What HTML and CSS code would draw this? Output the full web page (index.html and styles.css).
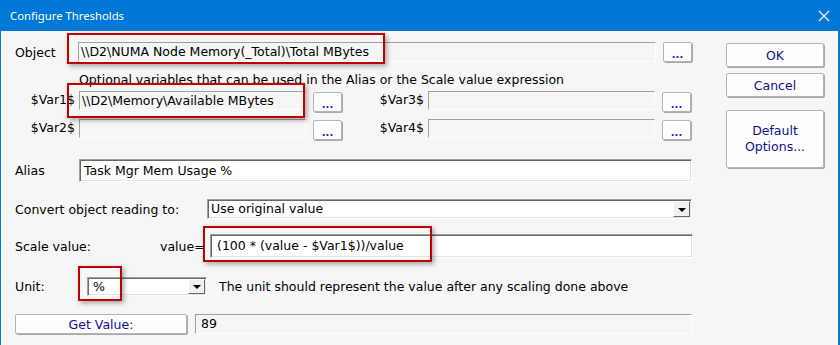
FILE: index.html
```html
<!DOCTYPE html>
<html>
<head>
<meta charset="utf-8">
<link rel="stylesheet" href="styles.css">
</head>
<body>
<div class="window">
  <div class="titlebar">
    <span class="title">Configure Thresholds</span>
    <svg class="close" width="12" height="12" viewBox="0 0 12 12"><path d="M1 1 L11 11 M11 1 L1 11" stroke="#fff" stroke-width="1.1" fill="none"/></svg>
  </div>
  <div class="content">
    <div class="main">
      <div class="row row-object">
        <span class="lbl w63">Object</span>
        <div class="field ro f-object">\\D2\NUMA Node Memory(_Total)\Total MBytes</div>
        <button class="btn dots">...</button>
      </div>
      <div class="row row-opt">Optional variables that can be used in the Alias or the Scale value expression</div>
      <div class="row vars v1">
        <span class="lbl vlbl-l">$Var1$</span>
        <div class="field ro f-var">\\D2\Memory\Available MBytes</div>
        <button class="btn dots">...</button>
        <span class="lbl vlbl-r">$Var3$</span>
        <div class="field ro f-var"></div>
        <button class="btn dots">...</button>
      </div>
      <div class="row vars v2">
        <span class="lbl vlbl-l">$Var2$</span>
        <div class="field ro f-var"></div>
        <button class="btn dots">...</button>
        <span class="lbl vlbl-r">$Var4$</span>
        <div class="field ro f-var"></div>
        <button class="btn dots">...</button>
      </div>
      <div class="row row-alias">
        <span class="lbl w64">Alias</span>
        <div class="field edit f-alias">Task Mgr Mem Usage %</div>
      </div>
      <div class="row row-convert">
        <span class="lbl w192">Convert object reading to:</span>
        <div class="field edit select f-convert"><span class="seltext">Use original value</span><span class="ddbtn"><i class="tri"></i></span></div>
      </div>
      <div class="row row-scale">
        <span class="lbl w145">Scale value:</span>
        <span class="lbl veq">value=</span>
        <div class="field edit f-scale">(100 * (value - $Var1$))/value</div>
      </div>
      <div class="row row-unit">
        <span class="lbl w72">Unit:</span>
        <div class="field edit select f-unit"><span class="seltext">%</span><span class="ddbtn"><i class="tri"></i></span></div>
        <span class="unit-note">The unit should represent the value after any scaling done above</span>
      </div>
      <div class="row row-get">
        <button class="btn getv">Get Value:</button>
        <div class="field ro f-result">89</div>
      </div>
    </div>
    <div class="side">
      <button class="btn sbtn ok">OK</button>
      <button class="btn sbtn cancel">Cancel</button>
      <button class="btn sbtn defaults">Default<br>Options...</button>
    </div>
  </div>
  <div class="hl hl-object"></div>
  <div class="hl hl-var1"></div>
  <div class="hl hl-scale"></div>
  <div class="hl hl-unit"></div>
</div>
</body>
</html>
```
FILE: styles.css
```css
* { box-sizing: border-box; }
html, body { margin: 0; padding: 0; background: #f6f6f6; }
.window {
  position: relative;
  width: 840px;
  height: 345px;
  background: #f6f6f6;
  border-left: 1px solid #0078d7;
  border-right: 2px solid #0078d7;
  font-family: "DejaVu Sans", Verdana, sans-serif;
  font-size: 12.5px;
  color: #000;
  overflow: hidden;
}
.titlebar {
  height: 31px;
  background: #0078d7;
  display: flex;
  align-items: center;
  justify-content: space-between;
  padding: 0 8px 0 9px;
  margin-left: -1px;
  margin-right: -2px;
}
.title {
  color: #fff;
  font-family: "Noto Sans", "Open Sans", sans-serif;
  font-size: 11.3px;
  padding-left: 1px;
}
.close { margin-right: 2px; }
.content {
  display: flex;
  padding: 11px 0 0 14px;
}
.main { width: 679px; display: flex; flex-direction: column; }
.side { margin-left: 32px; width: 98px; display: flex; flex-direction: column; padding-top: 1px; }

.row { display: flex; align-items: center; }
.lbl { white-space: nowrap; flex: none; }
.w63 { width: 63px; }
.w64 { width: 64px; }
.w192 { width: 192px; }
.w145 { width: 145px; }
.w72 { width: 72px; }

.field {
  flex: none;
  white-space: nowrap;
  overflow: hidden;
  line-height: 16px;
}
.ro {
  background: #f6f6f6;
  border: 1px solid;
  border-color: #a0a0a0 #ffffff #ffffff #a0a0a0;
  padding: 1px 2px;
}
.edit {
  background: #fff;
  border: 1px solid;
  border-color: #a0a0a0 #ffffff #ffffff #a0a0a0;
  box-shadow: inset 1px 1px 0 #696969, inset -1px -1px 0 #e3e3e3;
  padding: 2px 4px;
}

.btn {
  flex: none;
  font-family: inherit;
  font-size: inherit;
  background: #fdfdfd;
  border: 1px solid #b4b4b4;
  border-radius: 2px;
  box-shadow: 1px 1px 0 #a8a8a8;
  color: #101090;
  padding: 0;
  margin: 0;
  line-height: 15px;
}
.dots {
  width: 29px;
  height: 20px;
  color: #1030d0;
  font-weight: bold;
  font-size: 10px;
  letter-spacing: 0;
  padding-top: 4px;
}

.row-object { height: 20px; }
.f-object { width: 578px; height: 20px; margin-right: 7px; }

.row-opt { margin-top: 10px; height: 16px; padding-left: 64px; white-space: nowrap; line-height: 16px; }

.vars { height: 21px; align-items: flex-start; }
.v1 { margin-top: 3px; }
.v2 { margin-top: 7px; }
.vlbl-l { width: 64px; text-align: right; padding-right: 4px; padding-top: 1px; }
.vlbl-r { width: 86px; text-align: right; padding-right: 4px; padding-top: 1px; }
.f-var { width: 227px; height: 19px; margin-right: 7px; }
.vars .dots { margin-top: 1px; }

.row-alias { margin-top: 19px; }
.f-alias { width: 613px; height: 23px; padding-top: 3px; }

.row-convert { margin-top: 17px; }
.f-convert { width: 485px; height: 20px; }
.select { position: relative; padding: 1px 3px; }
.ddbtn {
  position: absolute;
  right: 1px;
  top: 1px;
  bottom: 1px;
  width: 17px;
  background: #f0f0f0;
  border: 1px solid;
  border-color: #ffffff #696969 #696969 #ffffff;
  display: flex;
  align-items: center;
  justify-content: center;
}
.tri {
  display: block;
  width: 0; height: 0;
  border-left: 4px solid transparent;
  border-right: 4px solid transparent;
  border-top: 4px solid #000;
  margin-top: 1px;
}

.row-scale { margin-top: 15px; }
.veq { width: 50px; padding-left: 0; }
.f-scale { width: 483px; height: 24px; padding: 3px 6px; }

.row-unit { margin-top: 19px; }
.f-unit { width: 120px; height: 19px; padding: 1px 5px; }
.unit-note { margin-left: 12px; white-space: nowrap; }

.row-get { margin-top: 18px; }
.getv { width: 172px; height: 20px; margin-right: 8px; }
.f-result { width: 497px; height: 20px; padding: 1px 5px; }

.sbtn { width: 98px; }
.ok { height: 24px; }
.cancel { height: 24px; margin-top: 6px; }
.defaults { height: 58px; margin-top: 13px; line-height: 16px; }

.hl {
  position: absolute;
  border: 2px solid #c00000;
  box-shadow: 2px 2px 5px rgba(0,0,0,0.35);
}
.hl-object { left: 66px; top: 33px; width: 318px; height: 31px; }
.hl-var1 { left: 66px; top: 83px; width: 238px; height: 35px; }
.hl-scale { left: 202px; top: 226px; width: 229px; height: 36px; }
.hl-unit { left: 77px; top: 266px; width: 44px; height: 35px; }
```
